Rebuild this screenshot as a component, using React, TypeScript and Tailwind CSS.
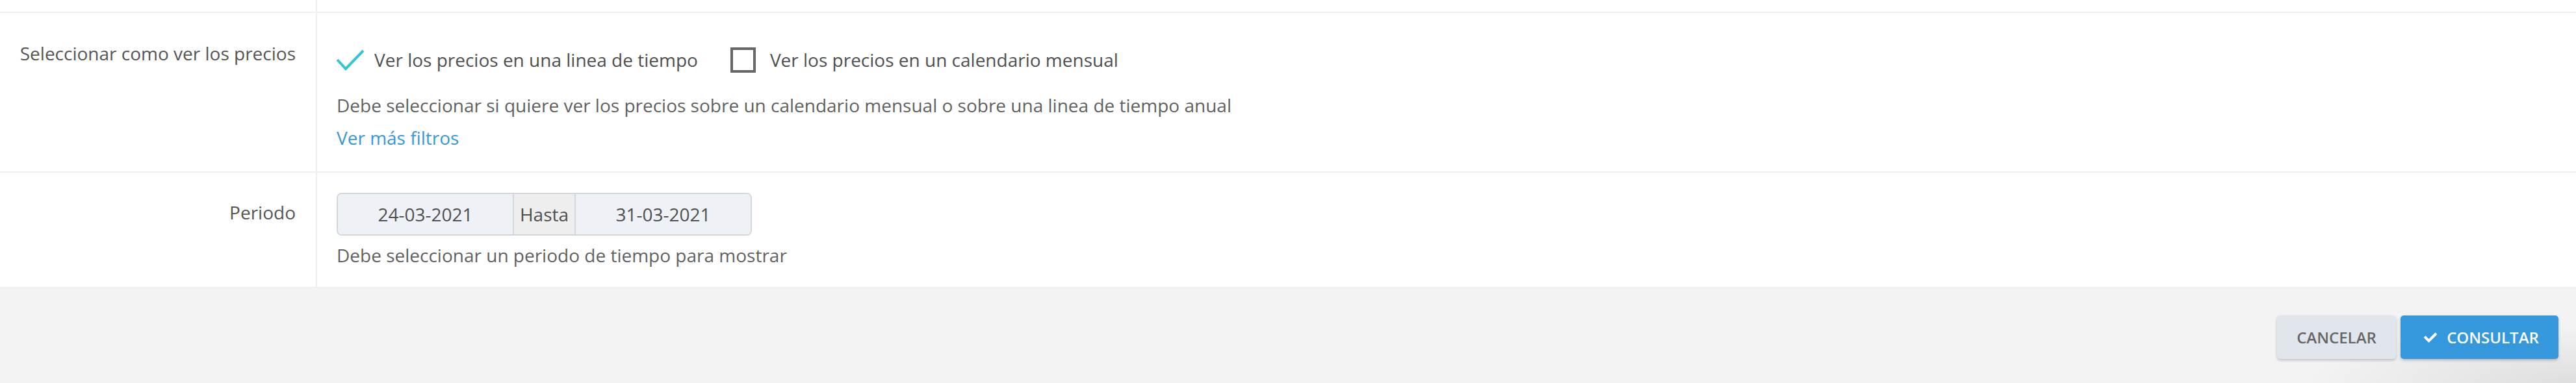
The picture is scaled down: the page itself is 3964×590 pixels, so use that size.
import { FaCheck } from "react-icons/fa";

const divider = "border-[#efefef]";

function LabelCell({ children, pt }: { children?: React.ReactNode; pt: string }) {
  return (
    <div className={`border-r-2 ${divider} text-right pr-[31px] ${pt} text-[#555]`}>
      {children}
    </div>
  );
}

export default function App() {
  return (
    <div className="w-full min-h-[590px] bg-white font-['Open_Sans',sans-serif] text-[28px] leading-[40px] text-[#4f4f4f] flex flex-col">
      {/* tail of previous row */}
      <div className={`grid grid-cols-[488px_1fr] h-[20px] border-b-2 ${divider}`}>
        <div className={`border-r-2 ${divider}`} />
        <div />
      </div>

      {/* price view selector */}
      <div className={`grid grid-cols-[488px_1fr] border-b-2 ${divider}`}>
        <LabelCell pt="pt-[42px]">Seleccionar como ver los precios</LabelCell>
        <div className="pl-[30px] pt-[52px] pb-[32px]">
          <div className="flex items-center h-[40px]">
            <svg width="44" height="34" viewBox="0 0 44 34" className="shrink-0 -ml-[1px]">
              <polyline
                points="2,17 15,31 42,3"
                fill="none"
                stroke="#36c6d3"
                strokeWidth="4"
              />
            </svg>
            <span className="ml-[15px]">Ver los precios en una linea de tiempo</span>
            <span className="ml-[50px] w-[39px] h-[39px] border-[4px] border-[#666] shrink-0" />
            <span className="ml-[22px]">Ver los precios en un calendario mensual</span>
          </div>
          <p className="mt-[30px] text-[#616161]">
            Debe seleccionar si quiere ver los precios sobre un calendario mensual o sobre una linea de tiempo anual
          </p>
          <a className="block mt-[10px] text-[#3598dc] cursor-pointer">Ver más filtros</a>
        </div>
      </div>

      {/* period */}
      <div className={`grid grid-cols-[488px_1fr] border-b-2 ${divider}`}>
        <LabelCell pt="pt-[41px]">Periodo</LabelCell>
        <div className="pl-[30px] pt-[31px] pb-[29px]">
          <div className="flex w-[639px] h-[66px] border-2 border-[#d3d6db] rounded-[8px] overflow-hidden">
            <div className="w-[269px] bg-[#eef1f5] flex items-center justify-center">24-03-2021</div>
            <div className="w-[97px] bg-[#eeeeee] border-x-2 border-[#d3d6db] flex items-center justify-center">
              Hasta
            </div>
            <div className="flex-1 bg-[#eef1f5] flex items-center justify-center">31-03-2021</div>
          </div>
          <p className="mt-[10px] text-[#616161]">Debe seleccionar un periodo de tiempo para mostrar</p>
        </div>
      </div>

      {/* actions */}
      <div className="flex-1 bg-[#f3f3f3] bg-[radial-gradient(ellipse_420px_90px_at_100%_100%,#dedede,#f3f3f3)] flex justify-end items-start pt-[42px] pb-[37px] pr-[27px] gap-[7px]">
        <button className="h-[67px] w-[183px] rounded-[5px] bg-[#e1e5ec] text-[#666] text-[24px] font-semibold uppercase shadow-[0_2px_4px_rgba(0,0,0,0.22)]">
          Cancelar
        </button>
        <button className="h-[67px] w-[243px] rounded-[5px] bg-[#3598dc] text-white text-[24px] font-semibold uppercase flex items-center justify-center gap-[15px] pl-[6px] shadow-[0_2px_4px_rgba(0,0,0,0.22)]">
          <FaCheck className="w-[20px] h-[20px]" />
          Consultar
        </button>
      </div>
    </div>
  );
}
